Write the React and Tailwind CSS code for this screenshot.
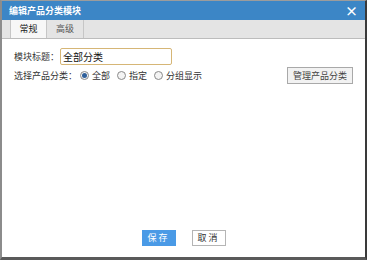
import { useState } from "react";

const font = { fontFamily: '"Noto Sans CJK SC", "Noto Sans", sans-serif' };

function Radio({ checked, label }) {
  return (
    <label className="flex items-center gap-[3px]">
      <span className="w-[9px] h-[9px] rounded-full border border-[#8a8a8a] bg-[#f4f4f4] flex items-center justify-center">
        {checked && <span className="w-[5px] h-[5px] rounded-full bg-[#2f5f9a]" />}
      </span>
      <span>{label}</span>
    </label>
  );
}

export default function App() {
  const [tab, setTab] = useState("base");

  return (
    <div
      className="w-[367px] h-[260px] flex flex-col bg-white border-t border-t-[#9c9c9c] border-l-2 border-l-[#8c8c8c] border-r-2 border-r-[#3a3a3a] border-b-[3px] border-b-[#5a5a5a] text-[9px] text-[#333]"
      style={font}
    >
      {/* title bar */}
      <div className="h-[19px] bg-[#3c86c6] flex items-center justify-between pl-[7px] pr-[7px] text-white font-bold">
        <span>编辑产品分类模块</span>
        <span className="text-[13px] leading-none">×</span>
      </div>

      {/* tabs */}
      <div className="h-[19px] bg-[#e4e4e4] border-b border-[#bcbcbc] flex items-stretch pl-[8px]">
        <button
          onClick={() => setTab("base")}
          className={`w-[37px] border-l border-r border-[#c6c6c6] ${tab === "base" ? "bg-[#f7f7f7] text-[#222]" : "text-[#555]"}`}
        >
          常规
        </button>
        <button
          onClick={() => setTab("adv")}
          className={`w-[37px] border-r border-[#c6c6c6] ${tab === "adv" ? "bg-[#f7f7f7] text-[#222]" : "text-[#555]"}`}
        >
          高级
        </button>
      </div>

      {/* content */}
      <div className="flex-1 flex flex-col px-[12px] pt-[9px]">
        <div className="flex items-center">
          <span>模块标题：</span>
          <input
            defaultValue="全部分类"
            className="ml-[1px] w-[112px] h-[17px] border border-[#d6b676] rounded-[2px] px-[2px] text-[10px] text-[#111] outline-none"
          />
        </div>
        <div className="flex items-center mt-[2px]">
          <span>选择产品分类：</span>
          <div className="flex items-center gap-[7px] ml-[3px]">
            <Radio checked label="全部" />
            <Radio label="指定" />
            <Radio label="分组显示" />
          </div>
          <button className="ml-auto w-[66px] h-[17px] bg-[#f2f2f2] border border-[#a9a9a9] text-[#444]">
            管理产品分类
          </button>
        </div>
      </div>

      {/* footer */}
      <div className="flex justify-center gap-[16px] pb-[11px]">
        <button className="w-[34px] h-[16px] bg-[#4a9ae6] text-white tracking-[2px]">保存</button>
        <button className="w-[34px] h-[16px] bg-white border border-[#b5b5b5] text-[#333] tracking-[2px]">取消</button>
      </div>
    </div>
  );
}
